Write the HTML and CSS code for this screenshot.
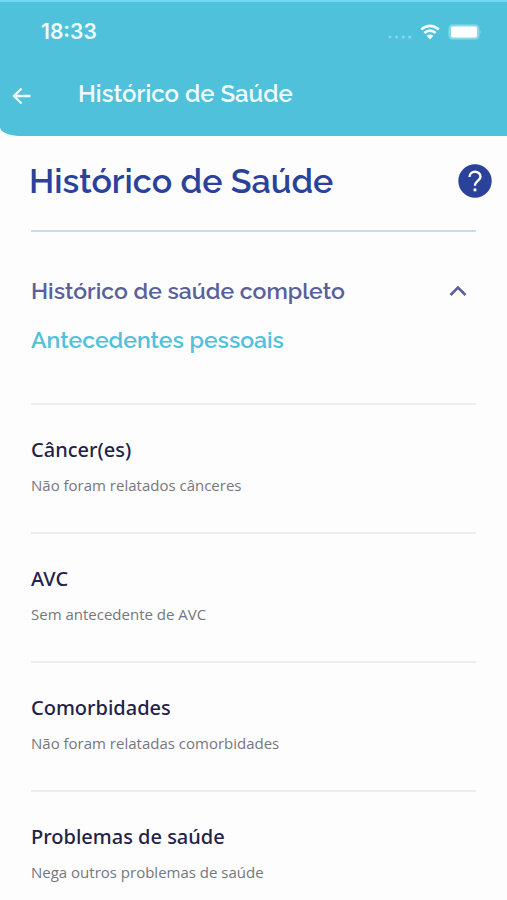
FILE: index.html
```html
<!DOCTYPE html>
<html lang="pt-BR">
<head>
<meta charset="utf-8">
<meta name="viewport" content="width=device-width, initial-scale=1">
<title>Histórico de Saúde</title>
<link rel="stylesheet" href="styles.css">
</head>
<body>
<header class="app-header">
  <div class="status-bar">
    <span class="clock">18:33</span>
    <div class="status-icons">
      <svg class="signal" viewBox="0 0 24 4" aria-hidden="true"><circle cx="2" cy="2" r="1.6"/><circle cx="8.600" cy="2" r="1.6"/><circle cx="15.200" cy="2" r="1.6"/><circle cx="21.800" cy="2" r="1.6"/></svg>
      <svg class="wifi" viewBox="0 0 20 16" aria-hidden="true"><path d="M1.200 5.600Q10-2 18.800 5.600M4.400 9Q10 4.200 15.600 9" fill="none" stroke="currentColor" stroke-width="2.600"/><path d="M6.600 11.800Q10 9 13.400 11.800L10 15.500Z" fill="currentColor"/></svg>
      <svg class="battery" viewBox="0 0 34 16" aria-hidden="true"><rect x=".5" y=".5" width="31" height="15" rx="4.500" fill="#8bd8ea"/><path d="M32.500 5.500q1.500 2.500 0 5z" fill="#8bd8ea"/><rect x="3" y="2.500" width="26" height="11" rx="2" fill="#fff"/></svg>
    </div>
  </div>
  <nav class="nav-bar">
    <button class="icon-button" type="button" aria-label="Voltar"><svg class="back" viewBox="0 0 20 18" aria-hidden="true"><path d="M18.500 9H2M9.500 1.500L2 9l7.500 7.500"/></svg></button>
    <span class="nav-title">Histórico de Saúde</span>
  </nav>
</header>
<main class="content">
  <div class="title-row">
    <h1>Histórico de Saúde</h1>
    <button class="icon-button" type="button" aria-label="Ajuda"><svg class="help" viewBox="0 0 34 34" aria-hidden="true"><circle cx="17" cy="17" r="16.700" fill="#2b429b"/><path d="M11.500 13C11.500 6 22.500 6 22.500 12.800C22.500 16.700 17 16.600 17 21.700" fill="none" stroke="#fff" stroke-width="2.400"/><rect x="15.600" y="24.500" width="2.800" height="2.800" fill="#fff"/></svg></button>
  </div>
  <section class="history">
    <h2><button class="accordion" type="button" aria-expanded="true"><span>Histórico de saúde completo</span><svg class="chevron" viewBox="0 0 18 12" aria-hidden="true"><path d="M1.500 10L9 2.500l7.500 7.500"/></svg></button></h2>
    <h3>Antecedentes pessoais</h3>
    <ul class="records">
      <li><h4>Câncer(es)</h4><p>Não foram relatados cânceres</p></li>
      <li><h4>AVC</h4><p>Sem antecedente de AVC</p></li>
      <li><h4>Comorbidades</h4><p>Não foram relatadas comorbidades</p></li>
      <li><h4>Problemas de saúde</h4><p>Nega outros problemas de saúde</p></li>
    </ul>
  </section>
</main>
</body>
</html>
```
FILE: styles.css
```css
* { box-sizing: border-box; }

body {
  margin: 0;
  background: #fdfdfd;
  color: #1f2349;
  font-family: "Open Sans", sans-serif;
  overflow-x: hidden;
}

h1, h2, h3, h4, p, ul { margin: 0; padding: 0; }

button {
  padding: 0;
  border: 0;
  background: none;
  color: inherit;
  font: inherit;
}

svg { display: block; }

.app-header {
  padding-bottom: 20px;
  border-top: 2px solid #70d9f3;
  border-bottom-left-radius: 20px 9px;
  background: #4fc1db;
  color: #effcff;
}

.status-bar {
  display: flex;
  align-items: center;
  justify-content: space-between;
  height: 60px;
  padding: 0 25px 0 41px;
}

.clock {
  font: 600 21px/28px Inter, sans-serif;
}

.status-icons {
  display: flex;
  align-items: center;
  gap: 8px;
}

.signal { width: 24px; height: 4px; margin-top: 10px; fill: #83d5e8; }
.wifi { width: 20px; height: 16px; }
.battery { width: 34px; height: 16px; }

.nav-bar {
  display: flex;
  align-items: center;
  gap: 46px;
  height: 54px;
  padding: 14px 12px 0;
}

.back {
  width: 20px;
  height: 18px;
  fill: none;
  stroke: currentColor;
  stroke-width: 2.4;
}

.nav-title {
  padding-bottom: 4px;
  font: 600 24px/32px Raleway, Lato, sans-serif;
}

.content { padding: 0 31px; }

.title-row {
  display: flex;
  align-items: center;
  justify-content: space-between;
  height: 96px;
  padding-bottom: 4px;
  border-bottom: 2px solid #c5dfed;
}

.title-row .icon-button { margin-right: -16px; }

h1 {
  margin-left: -2px;
  color: #2b429b;
  font: 600 34px/44px Raleway, Lato, sans-serif;
}

.help { width: 34px; height: 34px; }

.accordion {
  display: flex;
  align-items: center;
  justify-content: space-between;
  width: 100%;
  padding-right: 9px;
  color: #59609c;
  text-align: left;
}

h2, h3 {
  font: 600 23px/32px Raleway, Lato, sans-serif;
}

h2 { padding-top: 43px; }

.chevron {
  width: 18px;
  height: 12px;
  fill: none;
  stroke: currentColor;
  stroke-width: 2.6;
}

h3 {
  padding: 17px 0 47px;
  color: #4fc1db;
}

.records { list-style: none; }

.records li {
  padding: 31px 0 35px;
  border-top: 2px solid #ededef;
}

.records li:last-child { padding-bottom: 0; }

h4 {
  font: 500 20px/28px "Noto Sans", "Open Sans", sans-serif;
}

.records p {
  padding-top: 9px;
  color: #75777f;
  font-size: 15px;
  line-height: 24px;
}
```
